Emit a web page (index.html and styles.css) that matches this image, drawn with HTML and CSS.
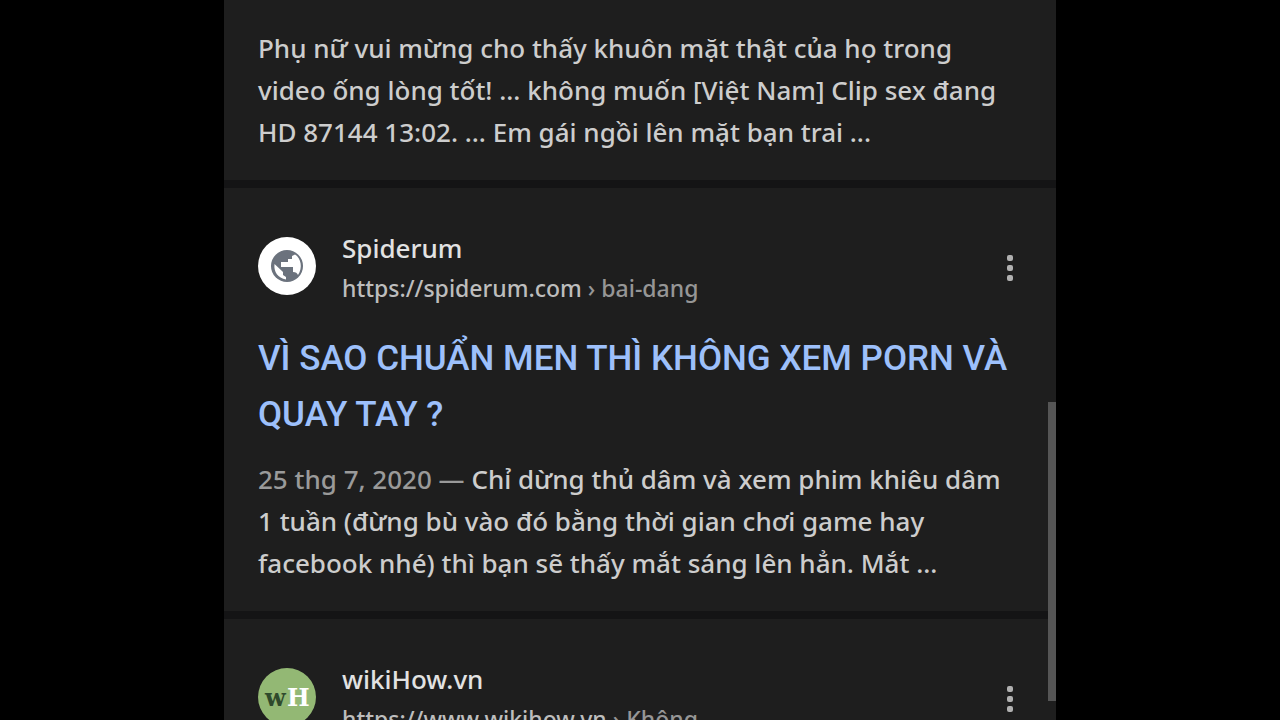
FILE: index.html
```html
<!DOCTYPE html>
<html lang="vi">
<head>
<meta charset="utf-8">
<meta name="viewport" content="width=device-width, initial-scale=1">
<title>Kết quả tìm kiếm</title>
<link rel="stylesheet" href="styles.css">
</head>
<body>
<main class="panel">
  <article class="result result-first">
    <p class="snippet">Phụ nữ vui mừng cho thấy khuôn mặt thật của họ trong<br>video ống lòng tốt! ... không muốn [Việt Nam] Clip sex đang<br>HD 87144 13:02. ... Em gái ngồi lên mặt bạn trai ...</p>
  </article>
  <article class="result">
    <header class="source">
      <svg class="favicon" viewBox="0 0 58 58" aria-hidden="true">
        <circle cx="29" cy="29" r="29" fill="#fff"/>
        <circle cx="29" cy="29" r="16" fill="#6b727d"/>
        <path d="M16.500 27L25 35V38L28 40V42.500C20 41 15.500 35 16.500 27ZM23 25H30V22H34V19L37 17.500C43 21 45 31 40 38C39 36 38 35 35 35V30H23Z" fill="#fff"/>
      </svg>
      <div class="site">
        <div class="name">Spiderum</div>
        <div class="url">https://spiderum.com <span class="path">› bai-dang</span></div>
      </div>
      <button class="more" type="button" aria-label="Thêm"><span class="dot"></span><span class="dot"></span><span class="dot"></span></button>
    </header>
    <h2 class="title"><a class="link" href="#">VÌ SAO CHUẨN MEN THÌ KHÔNG XEM PORN VÀ<br>QUAY TAY ?</a></h2>
    <p class="snippet"><span class="date">25 thg 7, 2020 —</span> Chỉ dừng thủ dâm và xem phim khiêu dâm<br>1 tuần (đừng bù vào đó bằng thời gian chơi game hay<br>facebook nhé) thì bạn sẽ thấy mắt sáng lên hẳn. Mắt ...</p>
  </article>
  <article class="result">
    <header class="source">
      <svg class="favicon" viewBox="0 0 58 58" aria-hidden="true">
        <circle cx="29" cy="29" r="29" fill="#93b874"/>
        <text class="mark" x="7" y="38" fill="#2f4a2c">w</text>
        <text class="mark" x="29" y="38" fill="#fff">H</text>
      </svg>
      <div class="site">
        <div class="name">wikiHow.vn</div>
        <div class="url">https://www.wikihow.vn <span class="path">› Không...</span></div>
      </div>
      <button class="more" type="button" aria-label="Thêm"><span class="dot"></span><span class="dot"></span><span class="dot"></span></button>
    </header>
  </article>
  <div class="scroll-thumb"></div>
</main>
</body>
</html>
```
FILE: styles.css
```css
* { box-sizing: border-box; }
body {
  margin: 0;
  background: #000;
  color: #cdcdcd;
  font-family: "Noto Sans", sans-serif;
  font-size: 26px;
  font-weight: 500;
}
.panel {
  position: relative;
  width: 65%;
  height: 100vh;
  margin: 0 auto;
  overflow: hidden;
  background: #1e1e1e;
}
.result {
  padding: 45px 34px 27px;
  border-bottom: 8px solid #141415;
}
.result-first { padding-top: 27px; }
.snippet {
  margin: 0;
  line-height: 42px;
  white-space: nowrap;
}
.date { color: #9a9a9a; }
.source {
  display: flex;
  align-items: flex-start;
}
.favicon {
  flex: none;
  width: 58px;
  height: 58px;
  margin: 4px 26px 0 0;
}
.mark {
  font-family: "DejaVu Serif", serif;
  font-size: 24px;
  font-weight: bold;
}
.site {
  display: grid;
  gap: 10px;
  flex: 1;
  line-height: 30px;
  white-space: nowrap;
}
.name { color: #e2e2e2; }
.url {
  color: #bdbdbd;
  font-size: 23px;
}
.path { color: #969696; }
.more {
  display: grid;
  gap: 4px;
  align-self: center;
  padding: 0 9px;
  border: 0;
  background: none;
}
.dot {
  width: 6px;
  height: 6px;
  border-radius: 2px;
  background: #b0b0b0;
}
.title {
  margin: 28px 0 15px;
  font-family: Roboto, sans-serif;
  font-size: 35px;
  font-weight: 500;
  line-height: 56px;
  white-space: nowrap;
}
.link {
  color: #9dc0fb;
  text-decoration: none;
}
.scroll-thumb {
  position: absolute;
  top: 402px;
  right: 0;
  width: 8px;
  height: 299px;
  background: #555;
}
```
